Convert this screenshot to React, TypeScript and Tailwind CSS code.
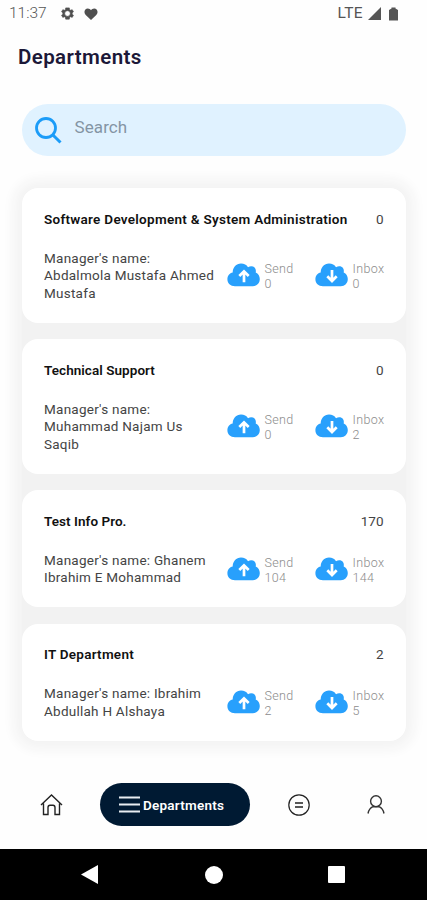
import React from 'react';

interface Department {
  name: string;
  nameSpacing: string;
  total: number;
  manager: string[];
  send: number;
  inbox: number;
}

const DEPARTMENTS: Department[] = [
  { name: 'Software Development & System Administration', nameSpacing: 'tracking-[0.280px]', total: 0, manager: ["Manager's name:", 'Abdalmola Mustafa Ahmed', 'Mustafa'], send: 0, inbox: 0 },
  { name: 'Technical Support', nameSpacing: 'tracking-[0.050px]', total: 0, manager: ["Manager's name:", 'Muhammad Najam Us', 'Saqib'], send: 0, inbox: 2 },
  { name: 'Test Info Pro.', nameSpacing: 'tracking-[0.050px]', total: 170, manager: ["Manager's name: Ghanem", 'Ibrahim E Mohammad'], send: 104, inbox: 144 },
  { name: 'IT Department', nameSpacing: 'tracking-[0.250px]', total: 2, manager: ["Manager's name: Ibrahim", 'Abdullah H Alshaya'], send: 2, inbox: 5 }
];

function CloudIcon({ down }: { down?: boolean }) {
  return (
    <svg width="33" height="24" viewBox="0 0 33 24" className="shrink-0">
      <path
        d="M8 23.3C3.4 23.3.4 20.3.4 16.3c0-3.5 2.2-6 5.300-6.700C5.700 4.300 9.300.5 14 .5c3.200 0 5.600 1.200 7 3.700 1-.7 2.100-1 3.200-1 3.300 0 5.300 2.700 4.500 6.300 2.500.9 4.100 3.500 4.100 6.600 0 4.200-3 7.200-7 7.200z"
        fill="#28a0fc"
      />
      {down ? (
        <path d="M17 7v10.500M12.300 13.300l4.700 4.700 4.700-4.700" fill="none" stroke="#fff" strokeWidth="2.700" />
      ) : (
        <path d="M17 19.200V8.700M12.300 13 17 8.300l4.700 4.700" fill="none" stroke="#fff" strokeWidth="2.700" />
      )}
    </svg>
  );
}

function Counter({ label, value, down }: { label: string, value: number, down?: boolean }) {
  return (
    <div className="flex w-[88px] shrink-0 gap-[4.500px]">
      <CloudIcon down={down} />
      <div className="-mt-[2px] text-[12.500px] leading-[15px] font-light tracking-[0.350px] text-[#8c8c8c]">
        <p>{label}</p>
        <p>{value}</p>
      </div>
    </div>
  );
}

function DepartmentCard({ department }: { department: Department }) {
  return (
    <li className="rounded-[16px] bg-white pt-[21.500px] pr-[22.500px] pb-[20.700px] pl-[22px]">
      <div className="flex h-[18px] items-center justify-between text-[13.500px] leading-[18px]">
        <h2 className={`font-semibold whitespace-nowrap text-[#111] ${department.nameSpacing}`}>{department.name}</h2>
        <span className="text-[#444]">{department.total}</span>
      </div>
      <div className="mt-[22px] flex items-center">
        <div className="w-[183px] shrink-0 text-[13.500px] leading-[17.500px] tracking-[0.250px] whitespace-nowrap text-[#444]">
          {department.manager.map(line => <p key={line}>{line}</p>)}
        </div>
        <div className="-mt-[1.500px] flex h-[24px] shrink-0">
          <Counter label="Send" value={department.send} />
          <Counter label="Inbox" value={department.inbox} down />
        </div>
      </div>
    </li>
  );
}

function StatusBar() {
  return (
    <div className="flex h-[28px] items-center pr-[29px] pl-[9px] text-[#555]">
      <span className="w-[51px] text-[15.500px] leading-none font-light">11:37</span>
      <svg width="15" height="15" viewBox="0 0 24 24" className="-mt-[1px] shrink-0">
        <path
          fill="#4f4f4f"
          stroke="#4f4f4f"
          fillRule="evenodd"
          d="M19.400 13a7.500 7.500 0 0 0 0-2l2.100-1.700-2-3.500-2.500 1a8 8 0 0 0-1.700-1L14.900 3H9.100l-.4 2.800a8 8 0 0 0-1.700 1l-2.500-1-2 3.500L4.600 11a7.500 7.500 0 0 0 0 2l-2.100 1.700 2 3.500 2.500-1a8 8 0 0 0 1.700 1l.4 2.800h5.800l.4-2.800a8 8 0 0 0 1.700-1l2.500 1 2-3.500zM12 16.500a4.500 4.500 0 1 1 0-9 4.500 4.500 0 0 1 0 9z"
        />
      </svg>
      <svg width="14" height="12" viewBox="0 0 14 12" className="-mt-[1px] ml-[9px]">
        <path fill="#4f4f4f" d="M7 12 1.700 6.900C-.8 4.300.7.500 3.800.5 5.200.5 6.300 1.200 7 2.300 7.700 1.200 8.800.5 10.200.5c3.100 0 4.600 3.800 2.100 6.400z" />
      </svg>
      <span className="ml-auto text-[15.500px] leading-none tracking-[0.400px]">LTE</span>
      <svg width="13" height="13" viewBox="0 0 13 13" className="-mt-[1px] ml-[5px]">
        <path fill="#555" d="M13 0v13H0z" />
      </svg>
      <svg width="9" height="14" viewBox="0 0 9 14" className="-mt-[1px] ml-[8px]">
        <path fill="#555" d="M2.500 1.500V.5h4v1L9 3v10.500H0V3z" />
      </svg>
    </div>
  );
}

function BottomNav() {
  return (
    <nav className="flex h-[43px] items-center pl-[40px]">
      <svg width="23" height="22" viewBox="0 0 23 22" fill="none" stroke="#222" strokeWidth="1.400">
        <path d="M1 11 11.500 1 22 11M3.500 9.500V20.500H8V13.500c0-1.500.7-2.300 2-2.300h3c1.300 0 2 .8 2 2.300v7h4.500V9.500" />
      </svg>
      <div className="ml-[37px] flex h-[43px] w-[150px] items-center rounded-full bg-[#001a33] pl-[19px]">
        <svg width="21" height="17" viewBox="0 0 21 17" stroke="#e8edf2" strokeWidth="1.900">
          <path d="M0 1.500h21M0 8.500h21M0 15.500h21" />
        </svg>
        <span className="mt-[2px] ml-[3px] text-[13.500px] leading-none font-semibold tracking-[0.240px] text-white">Departments</span>
      </div>
      <svg width="22" height="22" viewBox="0 0 22 22" fill="none" stroke="#222" strokeWidth="1.200" className="ml-[38px]">
        <circle cx="11" cy="11" r="10.200" />
        <path d="M7 9h8M7 13h8" strokeWidth="1.500" />
      </svg>
      <svg width="18" height="19" viewBox="0 0 18 19" fill="none" stroke="#333" strokeWidth="1.400" className="ml-[57px]">
        <circle cx="9" cy="6.200" r="5.400" />
        <path d="M1 18.500c.7-3.300 2.300-5.700 5-6.800h6c2.700 1.100 4.300 3.500 5 6.800" />
      </svg>
    </nav>
  );
}

export default function App() {
  return (
    <div className="flex h-[900px] w-[427px] flex-col overflow-hidden bg-[#fefefe] font-[Roboto,sans-serif]">
      <StatusBar />
      <h1 className="mt-[15px] ml-[18px] h-[28px] text-[20.500px] leading-[28px] font-semibold tracking-[0.400px] text-[#1c1838]">Departments</h1>

      <div className="mr-[21px] ml-[22px] mt-[33px] flex h-[52px] shrink-0 items-center rounded-full bg-[#e0f2ff] pl-[13px]">
        <svg width="27" height="27" viewBox="0 0 27 27" fill="none" stroke="#1b9cf8" strokeWidth="2.800">
          <circle cx="11" cy="11" r="9.500" />
          <path d="M17.700 17.700 25.500 25.500" strokeWidth="3" />
        </svg>
        <span className="-mt-[5px] ml-[12.500px] text-[17px] leading-none tracking-[0.100px] text-[#8495a4]">Search</span>
      </div>

      <ul className="mr-[21px] ml-[22px] mt-[32.300px] flex shrink-0 flex-col gap-[16.300px] rounded-[16px] bg-[#f2f2f2] shadow-[0_0_12px_9px_#f4f4f4]">
        {DEPARTMENTS.map(department => <DepartmentCard key={department.name} department={department} />)}
      </ul>

      <div className="mt-auto mb-[23px]">
        <BottomNav />
      </div>

      <div className="flex h-[51px] shrink-0 items-center bg-black pl-[81px]">
        <svg width="17" height="19" viewBox="0 0 17 19"><path fill="#fff" d="M17 0v19L0 9.500z" /></svg>
        <div className="ml-[107px] h-[18px] w-[18px] rounded-full bg-white" />
        <div className="ml-[105px] h-[17px] w-[17px] rounded-[1px] bg-white" />
      </div>
    </div>
  );
}
